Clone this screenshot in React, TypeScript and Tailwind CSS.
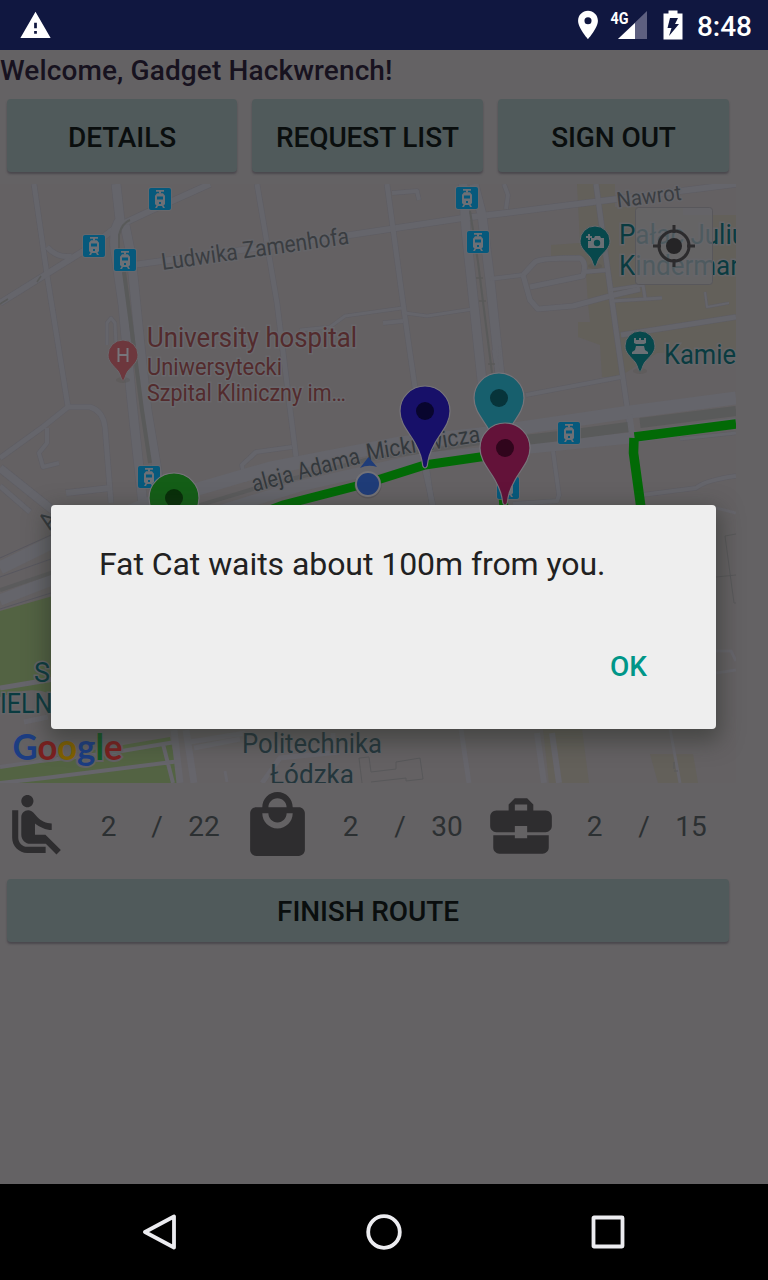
import type { ReactNode } from "react";
import {
  MdAirlineSeatReclineNormal,
  MdBusinessCenter,
  MdLocalMall,
  MdLocationOn,
  MdWarning,
} from "react-icons/md";

const ROBOTO = "font-['Roboto','Noto_Sans',sans-serif]";

function Tram({ x, y }: { x: number; y: number }) {
  return (
    <g transform={`translate(${x} ${y})`}>
      <rect x="-0.7" y="-0.7" width="23.4" height="23.4" rx="2.6" fill="#6a6b70" />
      <rect width="22" height="22" rx="2" fill="#06597c" />
      <path d="M7 2h8v1.7h-3v1.8h-2V3.700H7z" fill="#6d7076" />
      <path d="M8 5.300h6l2 2.500v8.400l-1.500 1 1.500 2.800h-2l-1-2H9l-1 2H6l1.500-2.800-1.500-1V7.800z" fill="#6d7076" />
      <rect x="8" y="8.500" width="6" height="3" fill="#06597c" />
      <rect x="10" y="14" width="2" height="2" fill="#06597c" />
    </g>
  );
}

function Pin({ x, y, fill, dot }: { x: number; y: number; fill: string; dot: string }) {
  return (
    <g transform={`translate(${x} ${y})`}>
      <path
        d="M-25 0A25 25 0 0 1 25 0C25 13 16 21 10 32C4 43 3.200 48 2.200 55Q0 59-2.200 55C-3.200 48-4 43-10 32C-16 21-25 13-25 0Z"
        fill={fill}
        stroke="#77757b"
        strokeWidth="1.200"
      />
      <circle r="9" fill={dot} />
    </g>
  );
}

function PlacePin({ x, y, fill, children }: { x: number; y: number; fill: string; children: ReactNode }) {
  return (
    <g transform={`translate(${x} ${y})`}>
      <ellipse cy="25" rx="7" ry="3" fill="#55524f" opacity="0.35" />
      <path
        d="M-15 0A15 15 0 0 1 15 0C15 7 9 11 5 16C3 19 2.500 21 1.500 24Q0 27-1.500 24C-2.500 21-3 19-5 16C-9 11-15 7-15 0Z"
        fill={fill}
        stroke="#69696d"
        strokeWidth="1"
      />
      {children}
    </g>
  );
}

const streets: [string, number][] = [
  ["M34 184L47 275L68 407L43 427L0 458", 5],
  ["M68 407H90Q103 411 105 427L111 503", 5],
  ["M47 428V443L39 453L43 467L59 463", 4],
  ["M0 303L45 275L90 247L118 226L150 211L210 184", 6],
  ["M47 247Q58 259 72 256", 5],
  ["M116 184L120 220Q113 228 115 250L123 305L131 393L143 505", 9],
  ["M125 225L131 255L140 345L147 410L157 470L162 505", 9],
  ["M133 265L350 235L463 218L506 213L736 184", 6],
  ["M107 345V323L111 318L115 323L116 345", 3],
  ["M0 468L55 512", 8],
  ["M0 486L30 512", 5],
  ["M66 493L110 488", 6],
  ["M256 452L242 465L245 482", 4],
  ["M257 184L277 303L297 465", 5],
  ["M387 184L403 303L410 353L432 505", 5],
  ["M392 193L417 191L419 200", 4],
  ["M300 330L330 327L345 316L402 308", 3],
  ["M405 313L427 316L473 309", 3],
  ["M383 323L403 321", 4],
  ["M463 184L466 230L483 390", 9],
  ["M474 184L482 215L490 280L501 385", 9],
  ["M490 279L523 275", 4],
  ["M250 458L256 452L292 447", 4],
  ["M504 184L508 195L506 209", 4],
  ["M523 275L535 262Q540 258 580 258Q587 262 583 276L530 287", 5],
  ["M523 275L530 300L538 309L573 306L610 296L640 289", 5],
  ["M583 272L607 270", 4],
  ["M596 184L605 250L616 330L634 455", 5],
  ["M610 290L643 285L645 298M612 301L662 298", 3],
  ["M621 335L736 317", 5],
  ["M705 292L707 307L729 303", 2],
  ["M526 395L621 377", 4],
  ["M553 451L559 495L557 501L513 504", 4],
  ["M642 495L696 488Q706 480 736 476", 4],
  ["M680 439L736 433", 3],
  ["M425 470L434 510", 5],
  ["M498 374L494 350", 4],
  ["M500 360L499 345", 2],
];

function CityMap() {
  return (
    <svg className="block h-[599px] w-[736px]" viewBox="0 184 736 599" fontFamily="Roboto, 'Noto Sans', sans-serif">
      <rect y="184" width="736" height="599" fill="#646163" />

      <g fill="#63605a">
        <path d="M577 184H615V207H683V215H736V350L657 353L619 377H602L600 345L578 337V322H590L588 304L585 259L551 257V245L580 243Z" />
        <path d="M543 729H582L589 783H549ZM650 754H693L698 783H658Z" />
      </g>

      <path d="M0 611L60 594V783H0Z" fill="#536343" />
      <path d="M0 697Q40 682 60 700V765H0Z" fill="#646163" />
      <path d="M0 766L170 737L180 783H0Z" fill="#536343" />

      <g fill="none" stroke="#5e5d63" strokeLinejoin="round">
        {streets.map(([d, w]) => (
          <path key={d} d={d} strokeWidth={w + 1} />
        ))}
      </g>
      <g fill="none" stroke="#65656b" strokeLinejoin="round">
        {streets.map(([d, w]) => (
          <path key={d} d={d} strokeWidth={w} />
        ))}
      </g>

      <g fill="none" stroke="#595a5a" strokeLinejoin="round">
        <path d="M119 250V235Q122 223 130 220" strokeWidth="2" />
        <path d="M124 272L133 340L142 410L150 463" strokeWidth="4" />
        <path d="M470 211L478 262L492 373" strokeWidth="2" />
        <path d="M0 304L8 299M37 282L41 276M476 278H483M479 301H486M488 364H495" strokeWidth="1.500" />
      </g>

      <g fill="none">
        <path d="M0 568L51 543L150 503L270 468L400 443L480 434L630 412L736 398" stroke="#65656b" strokeWidth="13" />
        <path d="M0 600L60 577L190 520L300 486L425 458L530 448L630 438L736 423" stroke="#65656b" strokeWidth="11" />
        <path d="M0 590L51 573L190 508L260 487L370 459L480 443" stroke="#5b5b5c" strokeWidth="4" />
        <path d="M525 440L560 436M575 434L628 427M640 423L736 411" stroke="#595a5a" strokeWidth="10" />
        <path d="M0 558L51 535M0 577L51 559M0 609L51 593" stroke="#58575f" strokeWidth="1" />
        <path d="M630 415L633 437" stroke="#65656b" strokeWidth="5" />
      </g>

      <g fill="none" stroke="#66656b">
        <path d="M0 688L60 678M24 722L48 717" strokeWidth="5" />
        <path d="M0 767L40 761L110 753L175 742M0 783L45 778L180 761M163 744L173 783" strokeWidth="4" />
        <path d="M174 730L180 783M186 730L194 783" strokeWidth="7" />
        <path d="M194 748L240 739M190 742L245 733M262 783L280 758L340 752M461 729L469 783M333 733V745" strokeWidth="5" />
        <path d="M537 733L544 783M552 733L559 783" strokeWidth="6" />
        <path d="M670 729L680 783M716 651H731L736 661M716 673L736 670M716 508L736 513" strokeWidth="3" />
        <path d="M225 771L227 782" strokeWidth="3" />
      </g>
      <g fill="none" stroke="#58585a" strokeWidth="1">
        <path d="M359 758L369 757L371 772L396 769V762L420 758L423 779L406 781V778L371 782M359 758L362 783" />
        <path d="M736 534L725 536L734 603H736M716 577L736 575M674 762V769M674 771H678" />
      </g>

      <g fill="#3a3d41" stroke="#646468" strokeWidth="3" paintOrder="stroke">
        <text transform="translate(162.500 270) rotate(-8)" fontSize="23.500" textLength="189" lengthAdjust="spacingAndGlyphs">
          Ludwika Zamenhofa
        </text>
        <text transform="translate(617.500 207.500) rotate(-7)" fontSize="21.500" textLength="65" lengthAdjust="spacingAndGlyphs">
          Nawrot
        </text>
      </g>

      <path d="M230 525L283 505L368 483L425 465L480 457L505 455" fill="none" stroke="#026a06" strokeWidth="9" />
      <path d="M501 460L504 510" fill="none" stroke="#026a06" strokeWidth="9" />
      <path d="M736 424L634.500 437" fill="none" stroke="#026a06" strokeWidth="9.500" />
      <path d="M634 438L633.500 453L641 508" fill="none" stroke="#026a06" strokeWidth="9.500" />

      <g fill="#33383c" stroke="#646468" strokeWidth="2" paintOrder="stroke" fontSize="23.500">
        <text transform="translate(254 492) rotate(-15)" textLength="111" lengthAdjust="spacingAndGlyphs">
          aleja Adama
        </text>
        <text transform="translate(367.500 460.500) rotate(-9.500)" textLength="115" lengthAdjust="spacingAndGlyphs">
          Mickiewicza
        </text>
        <text transform="translate(50 531) rotate(-55)">A</text>
      </g>

      <Tram x={149} y={188} />
      <Tram x={83} y={235} />
      <Tram x={114} y={249} />
      <Tram x={138} y={466} />
      <Tram x={456} y={187} />
      <Tram x={467} y={231} />
      <Tram x={558} y={422} />
      <Tram x={497} y={477} />

      <PlacePin x={123} y={355} fill="#6d373d">
        <path d="M-4.500-7V7M4.500-7V7M-4.500 0H4.500" stroke="#77757b" strokeWidth="2" />
      </PlacePin>
      <PlacePin x={595} y={241} fill="#07484c">
        <path d="M-7 0H-4V-3H-1L0-5H5L6-3H9V7H-7Z" fill="#6a7075" />
        <circle cx="2" cy="2" r="3.200" fill="#07484c" />
        <path d="M-9-4H-3M-6-7V-1" stroke="#6a7075" strokeWidth="2" />
      </PlacePin>
      <PlacePin x={640} y={346} fill="#07484c">
        <path d="M-6-8H-4V-6H-1V-8H1V-6H4V-8H6V-3L4-2H-4L-6-3ZM-4 0H4L5 4L8 6V8H-8V6L-5 4Z" fill="#6a7075" />
      </PlacePin>

      <g stroke="#69686c" strokeWidth="3" paintOrder="stroke" fill="#532b2d">
        <text x="147" y="347" fontSize="27.500" textLength="210" lengthAdjust="spacingAndGlyphs">University hospital</text>
        <text x="147" y="374.500" fontSize="23.500" textLength="135" lengthAdjust="spacingAndGlyphs">Uniwersytecki</text>
        <text x="147" y="400.500" fontSize="23.500" textLength="199" lengthAdjust="spacingAndGlyphs">Szpital Kliniczny im…</text>
      </g>
      <g stroke="#656568" strokeWidth="3" paintOrder="stroke" fill="#0a3b40" fontSize="28">
        <text x="619" y="244" textLength="127" lengthAdjust="spacingAndGlyphs">Pałac Juliu</text>
        <text x="619" y="275" textLength="140" lengthAdjust="spacingAndGlyphs">Kindermann</text>
        <text x="664" y="364" textLength="86" lengthAdjust="spacingAndGlyphs">Kamien</text>
        <text x="34" y="682" textLength="16" lengthAdjust="spacingAndGlyphs">S</text>
        <text x="0" y="713" textLength="69" lengthAdjust="spacingAndGlyphs">IELNA</text>
      </g>
      <g stroke="#636366" strokeWidth="2" paintOrder="stroke" fill="#24363c" fontSize="27.500">
        <text x="242" y="753" textLength="140" lengthAdjust="spacingAndGlyphs">Politechnika</text>
        <text x="270" y="784" textLength="84" lengthAdjust="spacingAndGlyphs">Łódzka</text>
      </g>

      <g>
        <path d="M360 468L368.500 457L377 467Q368 464 360 468Z" fill="#1f3c78" />
        <circle cx="368" cy="485" r="13.500" fill="#4d4c50" opacity="0.500" />
        <circle cx="368" cy="484" r="12" fill="#1f3c78" stroke="#737277" strokeWidth="2" />
      </g>

      <Pin x={174} y={498} fill="#145e17" dot="#082f09" />
      <Pin x={425} y={411} fill="#171069" dot="#08052e" />
      <Pin x={499} y={398} fill="#175f6d" dot="#07343a" />
      <Pin x={505} y={448} fill="#631239" dot="#30051c" />

      <g fontFamily="Lato, sans-serif" fontWeight="700" fontSize="37">
        <text x="12.500" y="760" textLength="110" lengthAdjust="spacingAndGlyphs" stroke="#626164" strokeWidth="4" paintOrder="stroke">
          <tspan fill="#1c3d82">G</tspan>
          <tspan fill="#7b201f">o</tspan>
          <tspan fill="#806000">o</tspan>
          <tspan fill="#1c3d82">g</tspan>
          <tspan fill="#125a25">l</tspan>
          <tspan fill="#7b201f">e</tspan>
        </text>
      </g>

      <rect x="635.500" y="207.500" width="77" height="77" rx="3" fill="#66656a" fillOpacity="0.75" stroke="#58575b" strokeWidth="1" />
      <g fill="none" stroke="#2c2b2d" strokeWidth="3">
        <circle cx="674" cy="246" r="15" />
        <path d="M674 225V233M674 259V267M653 246H661M687 246H695" />
        <circle cx="674" cy="246" r="8" fill="#252426" stroke="none" />
      </g>
    </svg>
  );
}

function RaisedButton({ label, size }: { label: string; size: string }) {
  return (
    <button
      className={`${size} flex items-center justify-center rounded-[4px] bg-[#505a5b] text-[28px] font-medium tracking-[-0.1px] text-[#0a0e0e] shadow-[0_2px_2px_rgba(50,48,55,0.5)]`}
    >
      {label}
    </button>
  );
}

function Capacity({ icon, used, total, usedWidth }: { icon: ReactNode; used: string; total: string; usedWidth: string }) {
  return (
    <div className="flex h-[73px] shrink-0 items-center text-[28px] text-[#2c3032]">
      {icon}
      <span className={`${usedWidth} pt-[3px] text-center`}>{used}</span>
      <span className="w-[26px] pt-[3px] text-center">/</span>
      <span className="w-[68px] pt-[3px] text-center">{total}</span>
    </div>
  );
}

export default function App() {
  return (
    <div className={`${ROBOTO} relative flex h-[1280px] w-[768px] flex-col overflow-hidden bg-[#646264]`}>
      <header className="flex h-[50px] shrink-0 items-center bg-[#101740] pr-4 pl-[19px] text-white">
        <MdWarning className="size-[33px]" />
        <div className="ml-auto flex items-center">
          <MdLocationOn className="size-[34px]" />
          <svg className="ml-[5px] h-[32px] w-[38px]" viewBox="0 0 38 32">
            <path d="M37 2V30H8Z" fill="#5e6080" />
            <path d="M25 14V30H8Z" fill="#fff" />
            <text x="0.500" y="14.500" fill="#fff" fontFamily="Roboto, sans-serif" fontWeight="700" fontSize="17" textLength="18" lengthAdjust="spacingAndGlyphs">
              4G
            </text>
          </svg>
          <svg className="ml-[15px] h-[30px] w-[20px]" viewBox="0 0 20 30">
            <path d="M0.500 3.500H5.500V0.500H14.500V3.500H19.500V29.500H0.500Z" fill="#fff" />
            <path d="M7 8H15L12 14H16L6 26L8.500 18H4.500Z" fill="#101740" />
          </svg>
          <span className="ml-[14px] pt-[3px] text-[28px] leading-8 font-medium">8:48</span>
        </div>
      </header>

      <main className="flex min-h-0 grow flex-col">
        <h1 className="mt-[4px] h-[33px] text-[28px] leading-[33px] font-medium tracking-[0.12px] text-[#17121f]">
          Welcome, Gadget Hackwrench!
        </h1>
        <div className="mt-[12px] ml-[7px] flex gap-[15px]">
          <RaisedButton label="DETAILS" size="h-[73px] w-[230px] pt-[4px]" />
          <RaisedButton label="REQUEST LIST" size="h-[73px] w-[231px] pt-[4px]" />
          <RaisedButton label="SIGN OUT" size="h-[73px] w-[231px] pt-[4px]" />
        </div>
        <div className="mt-[12px]">
          <CityMap />
        </div>
        <div className="mt-[6px] flex gap-[3px]">
          <Capacity icon={<MdAirlineSeatReclineNormal className="size-[73px] text-[#2e2d2f]" />} used="2" total="22" usedWidth="w-[71px]" />
          <Capacity icon={<MdLocalMall className="size-[73px] text-[#2e2d2f]" />} used="2" total="30" usedWidth="w-[73px]" />
          <Capacity icon={<MdBusinessCenter className="size-[74px] text-[#2e2d2f]" />} used="2" total="15" usedWidth="w-[73px]" />
        </div>
        <div className="mt-[17px] ml-[7px]">
          <RaisedButton label="FINISH ROUTE" size="h-[63px] w-[722px] pt-[2px]" />
        </div>
      </main>

      <nav className="flex h-[96px] shrink-0 items-center justify-center gap-[188px] bg-black">
        {[
          <path key="back" d="M32 2.500V33.500L3 18Z" />,
          <circle key="home" cx="18" cy="18" r="15.800" />,
          <rect key="recent" x="3.500" y="3.500" width="29" height="29" rx="0.500" />,
        ].map((shape) => (
          <svg key={shape.key} className="size-[36px]" viewBox="0 0 36 36" fill="none" stroke="#ececf0" strokeWidth="3.800" strokeLinejoin="round">
            {shape}
          </svg>
        ))}
      </nav>

      <div
        role="dialog"
        className="absolute top-[505px] left-[51px] flex h-[224px] w-[665px] flex-col rounded-[4px] bg-[#eee] px-[48px] pt-[40px] shadow-[0_8px_22px_4px_rgba(40,44,38,0.5)]"
      >
        <p className="text-[32px] leading-[38px] tracking-[-0.06px] text-[#212121]">Fat Cat waits about 100m from you.</p>
        <button className="mt-[67px] mr-[21px] self-end text-[28px] leading-[34px] font-medium text-[#009688]">OK</button>
      </div>
    </div>
  );
}
